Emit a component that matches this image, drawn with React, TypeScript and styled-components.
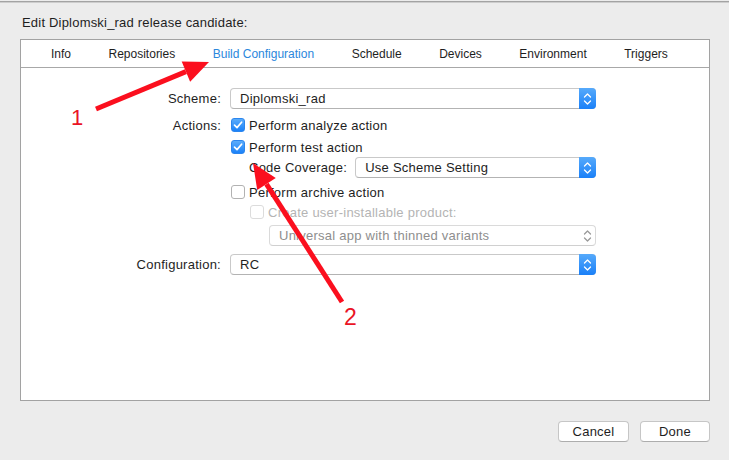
import React from "react";
import styled, { createGlobalStyle } from "styled-components";

const Global = createGlobalStyle`
  html, body { margin: 0; padding: 0; background: #ececec; }
  body { font-family: "Liberation Sans", Arial, Helvetica, sans-serif; }
`;

const Page = styled.div`
  position: relative;
  width: 729px;
  height: 460px;
  overflow: hidden;
  background: #ececec;
  display: flex;
  flex-direction: column;
`;

const TopLine = styled.div`
  height: 1px;
  margin-top: 1px;
  background: #a3a3a3;
  border-bottom: 1px solid #cdcdcd;
`;

const Title = styled.div`
  margin: 12px 0 0 22px;
  height: 16px;
  line-height: 16px;
  font-size: 13px;
  letter-spacing: 0.2px;
  color: #1e1e1e;
`;

const Panel = styled.div`
  margin: 8px 0 0 20px;
  width: 690px;
  height: 362px;
  box-sizing: border-box;
  background: #fff;
  border: 1px solid #a2a2a2;
  display: flex;
  flex-direction: column;
`;

const TabBar = styled.div`
  height: 27px;
  border-bottom: 1px solid #a8a8a8;
  display: flex;
  align-items: center;
  padding-left: 30px;
  gap: 37.5px;
`;

const Tab = styled.span<{ $active?: boolean }>`
  font-size: 12px;
  color: ${(p) => (p.$active ? "#2b87dc" : "#1e1e1e")};
  white-space: nowrap;
`;

const Form = styled.div`
  display: flex;
  flex-direction: column;
  padding-top: 20px;
`;

const Row = styled.div<{ $mt: number; $h: number }>`
  display: flex;
  align-items: center;
  height: ${(p) => p.$h}px;
  margin-top: ${(p) => p.$mt}px;
`;

const Label = styled.span`
  width: 209px;
  box-sizing: border-box;
  padding-right: 9px;
  text-align: right;
  font-size: 13px;
  letter-spacing: 0.25px;
  color: #1e1e1e;
  white-space: nowrap;
`;

const Control = styled.div<{ $indent?: number }>`
  width: 366px;
  box-sizing: border-box;
  padding-left: ${(p) => p.$indent ?? 0}px;
  display: flex;
  align-items: center;
  height: 100%;
`;

const InlineLabel = styled.span`
  font-size: 13px;
  letter-spacing: 0.25px;
  color: #1e1e1e;
  margin-right: 8px;
  white-space: nowrap;
`;

const Check = styled.label<{ $disabled?: boolean }>`
  display: flex;
  align-items: center;
  gap: 4px;
  margin-left: 1px;
  font-size: 13px;
  letter-spacing: 0.25px;
  color: ${(p) => (p.$disabled ? "#b4b4b4" : "#1e1e1e")};
  white-space: nowrap;
`;

const Box = styled.span<{ $checked?: boolean; $disabled?: boolean }>`
  width: 14px;
  height: 14px;
  box-sizing: border-box;
  border-radius: 3px;
  flex: none;
  display: inline-flex;
  align-items: center;
  justify-content: center;
  background: ${(p) =>
    p.$checked ? "linear-gradient(#5aacfb, #1b82f9)" : "#fff"};
  border: 1px solid
    ${(p) => (p.$checked ? "#2c86ee" : p.$disabled ? "#dcdcdc" : "#b2b2b2")};
`;

const Popup = styled.div<{ $disabled?: boolean }>`
  flex: 1;
  height: 21px;
  box-sizing: border-box;
  display: flex;
  align-items: center;
  background: #fff;
  border: 1px solid ${(p) => (p.$disabled ? "#dadada" : "#c9c9c9")};
  border-bottom-color: ${(p) => (p.$disabled ? "#d0d0d0" : "#b3b3b3")};
  border-radius: 4px;
`;

const PopupText = styled.span<{ $disabled?: boolean }>`
  flex: 1;
  padding-left: 9px;
  font-size: 13px;
  letter-spacing: 0.25px;
  color: ${(p) => (p.$disabled ? "#8e8e8e" : "#1e1e1e")};
  white-space: nowrap;
`;

const Stepper = styled.span<{ $disabled?: boolean }>`
  width: 17px;
  align-self: stretch;
  margin: -1px -1px -1px 0;
  border-radius: 0 4px 4px 0;
  background: ${(p) =>
    p.$disabled ? "transparent" : "linear-gradient(#56aafb, #1a80f8)"};
  display: flex;
  align-items: center;
  justify-content: center;
`;

const Footer = styled.div`
  margin: 20px 0 0 20px;
  width: 690px;
  display: flex;
  justify-content: flex-end;
  gap: 11px;
`;

const Button = styled.button<{ $w: number }>`
  width: ${(p) => p.$w}px;
  height: 21px;
  box-sizing: border-box;
  padding: 0;
  background: #fff;
  border: 1px solid #c6c6c6;
  border-bottom-color: #adadad;
  border-radius: 4px;
  font-family: "Liberation Sans", Arial, sans-serif;
  font-size: 13px;
  letter-spacing: 0.25px;
  color: #1e1e1e;
`;

const Overlay = styled.svg`
  position: absolute;
  left: 0;
  top: 0;
  pointer-events: none;
`;

const Callout = styled.span<{ $size: number }>`
  position: absolute;
  font-size: ${(p) => p.$size}px;
  line-height: ${(p) => p.$size}px;
  color: #ea1425;
`;

const Tick = () => (
  <svg width="10" height="10" viewBox="0 0 10 10">
    <path d="M1.5 5.2 L4 7.6 L8.6 2.2" fill="none" stroke="#fff" strokeWidth="1.7" strokeLinecap="round" strokeLinejoin="round" />
  </svg>
);

const Chevrons = ({ color }: { color: string }) => (
  <svg width="9" height="14" viewBox="0 0 9 14">
    <path d="M1.5 5 L4.5 2 L7.5 5" fill="none" stroke={color} strokeWidth="1.3" strokeLinecap="round" strokeLinejoin="round" />
    <path d="M1.5 9 L4.5 12 L7.5 9" fill="none" stroke={color} strokeWidth="1.3" strokeLinecap="round" strokeLinejoin="round" />
  </svg>
);

const Select = ({ value, disabled }: { value: string; disabled?: boolean }) => (
  <Popup $disabled={disabled}>
    <PopupText $disabled={disabled}>{value}</PopupText>
    <Stepper $disabled={disabled}>
      <Chevrons color={disabled ? "#9a9a9a" : "#fff"} />
    </Stepper>
  </Popup>
);

const CheckBox = ({ label, checked, disabled }: { label: string; checked?: boolean; disabled?: boolean }) => (
  <Check $disabled={disabled}>
    <Box $checked={checked} $disabled={disabled}>{checked && <Tick />}</Box>
    {label}
  </Check>
);

const arrowHead = (tx: number, ty: number, fx: number, fy: number, len: number, half: number) => {
  const dx = tx - fx;
  const dy = ty - fy;
  const l = Math.hypot(dx, dy);
  const ux = dx / l;
  const uy = dy / l;
  const bx = tx - ux * len;
  const by = ty - uy * len;
  const nx = -uy;
  const ny = ux;
  return {
    points: `${tx},${ty} ${bx + nx * half},${by + ny * half} ${bx - nx * half},${by - ny * half}`,
    bx,
    by,
  };
};

const Arrow = ({ fx, fy, tx, ty }: { fx: number; fy: number; tx: number; ty: number }) => {
  const h = arrowHead(tx, ty, fx, fy, 25, 11);
  return (
    <g>
      <line x1={fx} y1={fy} x2={h.bx} y2={h.by} stroke="#fb0f1e" strokeWidth="5" />
      <polygon points={h.points} fill="#fb0f1e" />
    </g>
  );
};

const tabs = ["Info", "Repositories", "Build Configuration", "Schedule", "Devices", "Environment", "Triggers"];

export default function App() {
  return (
    <>
      <Global />
      <Page>
        <TopLine />
        <Title>Edit Diplomski_rad release candidate:</Title>
        <Panel>
          <TabBar>
            {tabs.map((t) => (
              <Tab key={t} $active={t === "Build Configuration"}>{t}</Tab>
            ))}
          </TabBar>
          <Form>
            <Row $mt={0} $h={21}>
              <Label>Scheme:</Label>
              <Control><Select value="Diplomski_rad" /></Control>
            </Row>
            <Row $mt={6} $h={20}>
              <Label>Actions:</Label>
              <Control><CheckBox label="Perform analyze action" checked /></Control>
            </Row>
            <Row $mt={2} $h={20}>
              <Label />
              <Control><CheckBox label="Perform test action" checked /></Control>
            </Row>
            <Row $mt={0} $h={21}>
              <Label />
              <Control $indent={19}>
                <InlineLabel>Code Coverage:</InlineLabel>
                <Select value="Use Scheme Setting" />
              </Control>
            </Row>
            <Row $mt={4} $h={20}>
              <Label />
              <Control><CheckBox label="Perform archive action" /></Control>
            </Row>
            <Row $mt={0} $h={20}>
              <Label />
              <Control $indent={19}><CheckBox label="Create user-installable product:" disabled /></Control>
            </Row>
            <Row $mt={3} $h={21}>
              <Label />
              <Control $indent={39}><Select value="Universal app with thinned variants" disabled /></Control>
            </Row>
            <Row $mt={8} $h={21}>
              <Label>Configuration:</Label>
              <Control><Select value="RC" /></Control>
            </Row>
          </Form>
        </Panel>
        <Footer>
          <Button $w={71}>Cancel</Button>
          <Button $w={70}>Done</Button>
        </Footer>
        <Overlay width="729" height="460" viewBox="0 0 729 460">
          <Arrow fx={96} fy={109} tx={209} ty={62} />
          <Arrow fx={342} fy={302} tx={253} ty={163} />
        </Overlay>
        <Callout $size={22} style={{ left: 71, top: 107 }}>1</Callout>
        <Callout $size={23} style={{ left: 344, top: 306 }}>2</Callout>
      </Page>
    </>
  );
}
